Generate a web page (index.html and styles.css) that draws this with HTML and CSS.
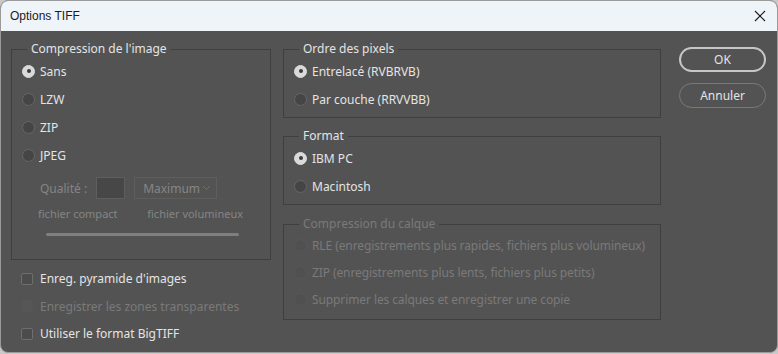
FILE: index.html
```html
<!DOCTYPE html>
<html lang="fr">
<head>
  <meta charset="UTF-8" />
  <title>Options TIFF</title>
  <link rel="stylesheet" href="styles.css">
</head>
<body>
  <div class="window">
    <div class="titlebar">
      <span class="title">Options TIFF</span>
      <span class="close">
        <svg width="12" height="12" viewBox="0 0 12 12"><path d="M1 1 L11 11 M11 1 L1 11" stroke="#1b1b1b" stroke-width="1.1" fill="none"/></svg>
      </span>
    </div>

    <div class="content">
      <!-- left column -->
      <div class="col-left">
        <fieldset class="group group-image">
          <legend>Compression de l'image</legend>
          <div class="opt"><span class="radio on"></span>Sans</div>
          <div class="opt"><span class="radio"></span>LZW</div>
          <div class="opt"><span class="radio"></span>ZIP</div>
          <div class="opt"><span class="radio"></span>JPEG</div>
          <div class="quality">
            <span class="dim">Qualité :</span>
            <span class="qbox"></span>
            <span class="select">Maximum
              <svg width="9" height="6" viewBox="0 0 9 6"><path d="M1 1 L4.5 4.5 L8 1" stroke="#6e6e6e" stroke-width="1" fill="none"/></svg>
            </span>
          </div>
          <div class="sizes">
            <span>fichier compact</span>
            <span>fichier volumineux</span>
          </div>
          <div class="slider"></div>
        </fieldset>

        <div class="checks">
          <div class="opt"><span class="check"></span>Enreg. pyramide d'images</div>
          <div class="opt disabled"><span class="check"></span>Enregistrer les zones transparentes</div>
          <div class="opt"><span class="check"></span>Utiliser le format BigTIFF</div>
        </div>
      </div>

      <!-- middle column -->
      <div class="col-mid">
        <fieldset class="group">
          <legend>Ordre des pixels</legend>
          <div class="opt"><span class="radio on"></span>Entrelacé (RVBRVB)</div>
          <div class="opt"><span class="radio"></span>Par couche (RRVVBB)</div>
        </fieldset>

        <fieldset class="group">
          <legend>Format</legend>
          <div class="opt"><span class="radio on"></span>IBM PC</div>
          <div class="opt"><span class="radio"></span>Macintosh</div>
        </fieldset>

        <fieldset class="group group-calque disabled">
          <legend>Compression du calque</legend>
          <div class="opt"><span class="radio"></span>RLE (enregistrements plus rapides, fichiers plus volumineux)</div>
          <div class="opt"><span class="radio"></span>ZIP (enregistrements plus lents, fichiers plus petits)</div>
          <div class="opt"><span class="radio"></span>Supprimer les calques et enregistrer une copie</div>
        </fieldset>
      </div>

      <!-- buttons -->
      <div class="col-buttons">
        <button class="btn default">OK</button>
        <button class="btn">Annuler</button>
      </div>
    </div>
  </div>
</body>
</html>
```

FILE: styles.css
```css
:root {
  --bg: #535353;
  --text: #e4e4e4;
  --dim: #858585;
  --line: #3f3f3f;
}

body {
  margin: 0;
  background: #c9c9c9;
  font-family: 'Noto Sans', sans-serif;
  font-size: 12px;
}

.window {
  width: 776px;
  height: 351px;
  border: 1px solid #9a9a9a;
  border-radius: 8px;
  overflow: hidden;
  background: var(--bg);
}

.titlebar {
  height: 30px;
  background: #eff4f9;
  display: flex;
  align-items: center;
  justify-content: space-between;
  padding: 0 10px 0 9px;
}

.title {
  font-family: 'Liberation Sans', sans-serif;
  font-size: 12px;
  color: #1b1b1b;
}

.close {
  display: flex;
  margin-right: 1px;
}

.content {
  display: flex;
  padding: 10px 0 0 10px;
  color: var(--text);
}

.col-left {
  width: 260px;
}

.col-mid {
  width: 378px;
  margin-left: 12px;
}

.col-buttons {
  margin-left: 18px;
  padding-top: 6px;
  display: flex;
  flex-direction: column;
  gap: 11px;
}

.group {
  margin: 0;
  padding: 0 4px 4px 5px;
  border: 1px solid var(--line);
  min-width: 0;
}

.group + .group {
  margin-top: 10px;
}

legend {
  padding: 0 4px;
  margin-left: 10px;
  line-height: 16px;
  color: var(--text);
}

.group-image {
  box-sizing: border-box;
  height: 219px;
  padding-bottom: 0;
}

.group-calque {
  margin-top: 11px !important;
  padding-bottom: 6px;
}

.group-calque .opt {
  height: 27px;
  letter-spacing: -0.1px;
}

.opt {
  display: flex;
  align-items: center;
  height: 28px;
  white-space: nowrap;
}

.radio {
  width: 13px;
  height: 13px;
  border-radius: 50%;
  background: #454545;
  border: 1px solid #666;
  box-sizing: border-box;
  margin: 0 5px 0 5px;
  position: relative;
}

.radio.on {
  background: #dadada;
  border-color: #dadada;
}

.radio.on::after {
  content: "";
  position: absolute;
  left: 3.5px;
  top: 3.5px;
  width: 4px;
  height: 4px;
  border-radius: 50%;
  background: #3a3a3a;
}

.disabled,
.disabled legend {
  color: #7a7a7a;
}

.disabled .radio {
  background: #505050;
  border-color: #585858;
}

.quality {
  display: flex;
  align-items: center;
  margin: 8px 0 0 23px;
  height: 22px;
}

.dim {
  color: var(--dim);
}

.qbox {
  width: 27px;
  height: 20px;
  margin-left: 9px;
  background: #474747;
  border: 1px solid #5e5e5e;
}

.select {
  display: flex;
  align-items: center;
  justify-content: space-between;
  width: 68px;
  height: 20px;
  margin-left: 9px;
  padding: 0 5px 0 8px;
  border: 1px solid #5e5e5e;
  color: var(--dim);
}

.sizes {
  display: flex;
  justify-content: space-between;
  margin: 7px 23px 0 21px;
  font-size: 11px;
  line-height: 16px;
  color: var(--dim);
}

.slider {
  height: 3px;
  margin: 11px 27px 0 29px;
  background: #7f7f7f;
  border-radius: 2px;
}

.checks {
  margin-top: 5px;
  padding-left: 10px;
}

.checks .opt {
  height: 27.5px;
}

.check {
  width: 12px;
  height: 12px;
  box-sizing: border-box;
  border: 1px solid #6e6e6e;
  border-radius: 2px;
  background: #4c4c4c;
  margin-right: 7px;
}

.disabled .check {
  border-color: #555;
  background: #565656;
}

.btn {
  width: 87px;
  height: 25px;
  border-radius: 13px;
  background: var(--bg);
  border: 1px solid #7a7a7a;
  color: var(--text);
  font-family: 'Noto Sans', sans-serif;
  font-size: 12px;
  padding: 0;
}

.btn.default {
  border: 2px solid #c6c6c6;
}
```
